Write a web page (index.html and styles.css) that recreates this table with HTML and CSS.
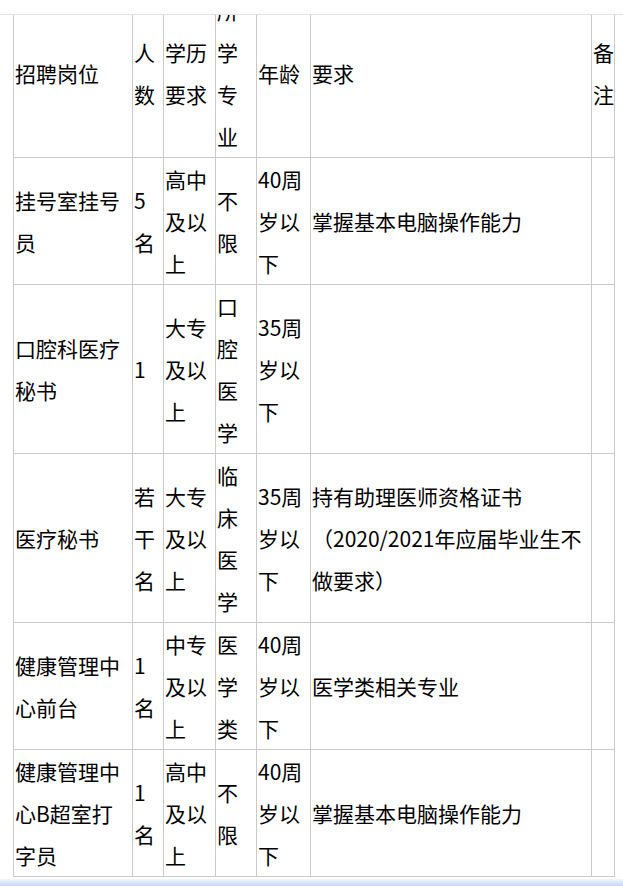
FILE: index.html
```html
<!DOCTYPE html>
<html lang="zh-CN">
<head>
<meta charset="utf-8">
<title>招聘岗位</title>
<link rel="stylesheet" href="styles.css">
</head>
<body>
<div class="page">
  <div class="topbar"></div>
  <div class="viewport">
    <table class="jobs">
      <colgroup>
        <col class="c-post">
        <col class="c-num">
        <col class="c-edu">
        <col class="c-major">
        <col class="c-age">
        <col class="c-req">
        <col class="c-note">
      </colgroup>
      <tbody>
        <tr>
          <td>招聘岗位</td>
          <td>人数</td>
          <td>学历要求</td>
          <td>所学专业</td>
          <td>年龄</td>
          <td>要求</td>
          <td>备注</td>
        </tr>
        <tr>
          <td>挂号室挂号员</td>
          <td>5名</td>
          <td>高中及以上</td>
          <td>不限</td>
          <td>40周岁以下</td>
          <td>掌握基本电脑操作能力</td>
          <td></td>
        </tr>
        <tr>
          <td>口腔科医疗秘书</td>
          <td>1</td>
          <td>大专及以上</td>
          <td>口腔医学</td>
          <td>35周岁以下</td>
          <td></td>
          <td></td>
        </tr>
        <tr>
          <td>医疗秘书</td>
          <td>若干名</td>
          <td>大专及以上</td>
          <td>临床医学</td>
          <td>35周岁以下</td>
          <td>持有助理医师资格证书（2020/2021年应届毕业生不做要求）</td>
          <td></td>
        </tr>
        <tr>
          <td>健康管理中心前台</td>
          <td>1名</td>
          <td>中专及以上</td>
          <td>医学类</td>
          <td>40周岁以下</td>
          <td>医学类相关专业</td>
          <td></td>
        </tr>
        <tr>
          <td>健康管理中心B超室打字员</td>
          <td>1名</td>
          <td>高中及以上</td>
          <td>不限</td>
          <td>40周岁以下</td>
          <td>掌握基本电脑操作能力</td>
          <td></td>
        </tr>
      </tbody>
    </table>
  </div>
  <div class="bottombar"></div>
</div>
</body>
</html>
```

FILE: styles.css
```css
html, body {
  margin: 0;
  padding: 0;
  background: #ffffff;
}

.page {
  width: 623px;
  height: 886px;
  overflow: hidden;
  display: flex;
  flex-direction: column;
  font-family: "Noto Sans CJK SC", "Noto Sans", sans-serif;
  color: #000000;
}

.topbar {
  flex: 0 0 14px;
  border-bottom: 1px solid #e4e4e4;
  background: #ffffff;
}

.viewport {
  flex: 0 0 863px;
  overflow: hidden;
}

.jobs {
  margin: -27px 0 0 13px;
  width: 602px;
  table-layout: fixed;
  border-collapse: collapse;
  font-size: 21px;
  line-height: 42px;
}

.jobs td {
  border: 1px solid #cacaca;
  padding: 0 1px;
  vertical-align: middle;
  text-align: left;
  word-break: normal;
  overflow-wrap: anywhere;
}

.c-post { width: 119px; }
.c-num { width: 31px; }
.c-edu { width: 52px; }
.c-major { width: 41px; }
.c-age { width: 54px; }
.c-req { width: 281px; }
.c-note { width: 23px; }

.bottombar {
  flex: 1 1 auto;
  margin-top: 1px;
  background: linear-gradient(to bottom, #f2f5fc 0%, #dbe5f8 50%, #c6d6f4 100%);
}
```
